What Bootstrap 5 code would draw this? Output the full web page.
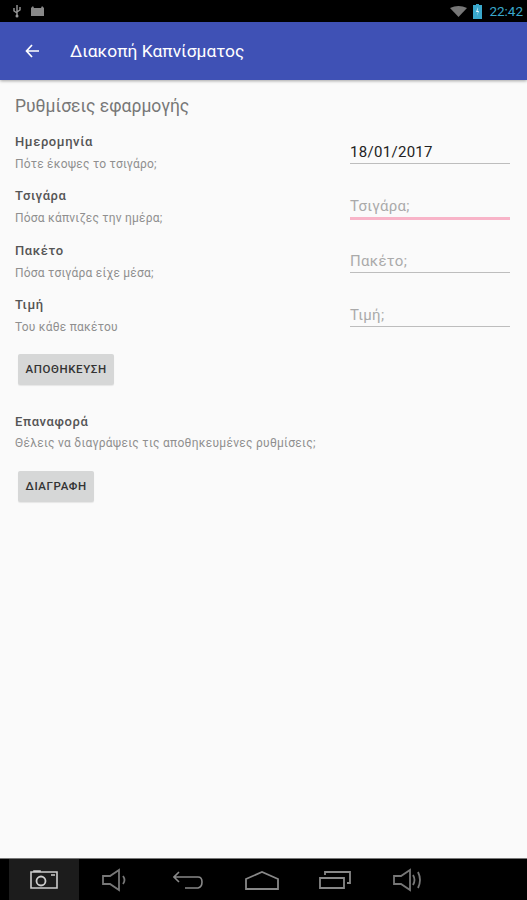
<!DOCTYPE html>
<html lang="el">
<head>
<meta charset="utf-8">
<title>Διακοπή Καπνίσματος</title>
<link href="https://cdn.jsdelivr.net/npm/bootstrap@5.3.0/dist/css/bootstrap.min.css" rel="stylesheet">
<style>
html,body{height:900px;overflow:hidden}
body{font-family:Roboto,"Noto Sans",sans-serif;background:#fafafa;color:#444}
.shell{height:900px}
.statusbar{height:22px;background:#000;padding:0 4px 0 12px;flex:none}
.stime{font-size:13.5px;color:#3aa8cc;line-height:22px}
.wifiicon{margin-right:6px}
.batticon{margin-right:7px}
.appbar{height:58px;background:#3f51b5;color:#fff;flex:none;padding-left:25px;box-shadow:0 1px 3px rgba(0,0,0,.35);position:relative}
.apptitle{font-size:17.4px;margin-left:31px;line-height:58px}
.pagebody{padding:0 17px 0 15px;min-height:0}
.pagehead{font-size:17.5px;color:#777;line-height:24px;margin:14px 0 15px}
.setrow{height:54.3px}
.setlabel{font-size:13px;font-weight:500;color:#555;line-height:18px;letter-spacing:.6px}
.setsub{font-size:12px;color:#8f8f8f;line-height:14px;margin-top:6px;letter-spacing:.22px}
.fieldbox{width:160px;height:25px;border-bottom:1px solid #bdbdbd;font-size:15px;line-height:26px;color:#aaa;margin-top:6px;letter-spacing:.3px}
.fieldval{color:#222}
.fieldon{border-bottom:3px solid #f8b4c8;height:27px}
.flatbtn{background:#d6d7d7;color:#333;font-size:11.5px;font-weight:500;height:31px;border:0;border-radius:2px;padding:0 7.5px;line-height:31px;letter-spacing:.6px;margin:4px 0 0 3px;box-shadow:0 1px 1px rgba(0,0,0,.08)}
.resetlabel{margin-top:28px}
.resetsub{margin-top:5px;letter-spacing:.28px}
.resetbtn{margin-top:21px}
.navbarbottom{height:42px;background:#000;border-top:1px solid #777;flex:none}
.navslot{width:73px;height:41px}
.navon{width:70px;background:#1c1c1c;margin-left:9px}
</style>
</head>
<body>
<div class="shell d-flex flex-column">
  <div class="statusbar d-flex align-items-center">
    <svg width="10" height="14" viewBox="0 0 10 14" class="me-2"><path d="M5 1v12M2 4v3l3 2M8 3v3L5 8" fill="none" stroke="#999" stroke-width="1.4"/><circle cx="5" cy="12" r="1.5" fill="#999"/></svg>
    <svg width="15" height="10" viewBox="0 0 15 10"><path d="M1 2l2-2 1 2h7l1-2 2 2v8H1z" fill="#888"/></svg>
    <div class="ms-auto d-flex align-items-center">
      <svg width="17" height="11" viewBox="0 0 17 11" class="wifiicon"><path d="M0 2Q8.500-2 17 2L8.500 11z" fill="#777"/></svg>
      <svg width="9" height="15" viewBox="0 0 9 15" class="batticon"><path d="M3 0h3v1h3v14H0V1h3z" fill="#3aa8cc"/><path d="M5 3L3 8h2L4 12l2-5H4.500z" fill="#e8f6fb"/></svg>
      <span class="stime">22:42</span>
    </div>
  </div>
  <div class="appbar d-flex align-items-center">
    <svg width="14" height="14" viewBox="0 0 14 14"><path d="M14 7H1.500M7 1L1.500 7 7 13" fill="none" stroke="#fff" stroke-width="1.7"/></svg>
    <div class="apptitle">Διακοπή Καπνίσματος</div>
  </div>
  <div class="pagebody flex-grow-1">
    <div class="pagehead">Ρυθμίσεις εφαρμογής</div>
    <div class="setrow d-flex justify-content-between">
      <div><div class="setlabel">Ημερομηνία</div><div class="setsub">Πότε έκοψες το τσιγάρο;</div></div>
      <div class="fieldbox fieldval">18/01/2017</div>
    </div>
    <div class="setrow d-flex justify-content-between">
      <div><div class="setlabel">Τσιγάρα</div><div class="setsub">Πόσα κάπνιζες την ημέρα;</div></div>
      <div class="fieldbox fieldon">Τσιγάρα;</div>
    </div>
    <div class="setrow d-flex justify-content-between">
      <div><div class="setlabel">Πακέτο</div><div class="setsub">Πόσα τσιγάρα είχε μέσα;</div></div>
      <div class="fieldbox">Πακέτο;</div>
    </div>
    <div class="setrow d-flex justify-content-between">
      <div><div class="setlabel">Τιμή</div><div class="setsub">Του κάθε πακέτου</div></div>
      <div class="fieldbox">Τιμή;</div>
    </div>
    <button type="button" class="btn flatbtn d-block">ΑΠΟΘΗΚΕΥΣΗ</button>
    <div class="setlabel resetlabel">Επαναφορά</div>
    <div class="setsub resetsub">Θέλεις να διαγράψεις τις αποθηκευμένες ρυθμίσεις;</div>
    <button type="button" class="btn flatbtn resetbtn d-block">ΔΙΑΓΡΑΦΗ</button>
  </div>
  <div class="navbarbottom d-flex">
    <div class="navslot navon d-flex align-items-center justify-content-center">
      <svg width="28" height="20" viewBox="0 0 28 20"><path d="M1 2h26v16H1zM4 2v-1h6v1M21 5h4" fill="none" stroke="#ccc" stroke-width="1.6"/><circle cx="11" cy="11" r="4.500" fill="none" stroke="#ccc" stroke-width="1.8"/></svg>
    </div>
    <div class="navslot d-flex align-items-center justify-content-center">
      <svg width="27" height="24" viewBox="0 0 27 24"><path d="M1 8h7l9-6v20l-9-6H1zM21 8q3 4 0 8" fill="none" stroke="#777" stroke-width="1.8"/></svg>
    </div>
    <div class="navslot d-flex align-items-center justify-content-center">
      <svg width="31" height="20" viewBox="0 0 31 20"><path d="M6 2L1 7l5 5M1 7h24q4 0 4 5t-4 6H12" fill="none" stroke="#888" stroke-width="1.6"/></svg>
    </div>
    <div class="navslot d-flex align-items-center justify-content-center">
      <svg width="34" height="20" viewBox="0 0 34 20"><path d="M1 9L17 2l16 7v10H1z" fill="none" stroke="#888" stroke-width="1.8"/></svg>
    </div>
    <div class="navslot d-flex align-items-center justify-content-center">
      <svg width="32" height="20" viewBox="0 0 32 20"><path d="M1 8h24v10H1zM6 5V2h25v11h-3" fill="none" stroke="#888" stroke-width="1.8"/></svg>
    </div>
    <div class="navslot d-flex align-items-center justify-content-center">
      <svg width="30" height="24" viewBox="0 0 30 24"><path d="M1 8h7l9-6v20l-9-6H1zM20 7q3 5 0 10M25 4q4 8 0 16" fill="none" stroke="#777" stroke-width="1.8"/></svg>
    </div>
  </div>
</div>
<script src="https://cdn.jsdelivr.net/npm/bootstrap@5.3.0/dist/js/bootstrap.bundle.min.js"></script>
</body>
</html>
